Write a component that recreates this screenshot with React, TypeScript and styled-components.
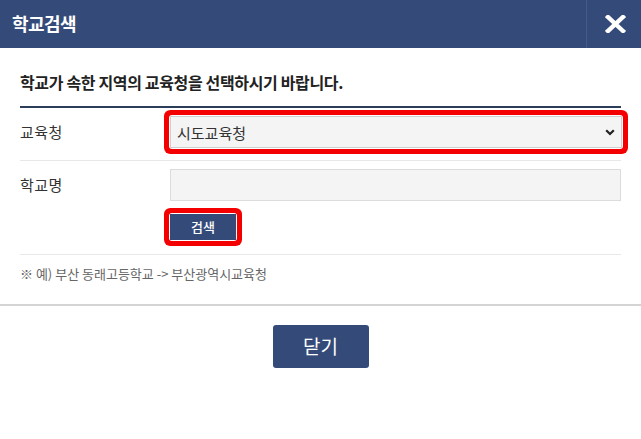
import React from "react";
import styled, { createGlobalStyle } from "styled-components";

const Global = createGlobalStyle`
  html, body { margin: 0; padding: 0; background: #fff; }
  body { font-family: "Noto Sans CJK KR", "Noto Sans", sans-serif; color: #222; }
  * { box-sizing: border-box; }
`;

const NAVY = "#344b79";

const Popup = styled.div`
  width: 641px;
  height: 439px;
  background: #fff;
`;

const Header = styled.header`
  display: flex;
  height: 48px;
  background: ${NAVY};
`;

const Title = styled.h1`
  flex: 1;
  margin: 0;
  padding-left: 12px;
  font-size: 18px;
  font-weight: 700;
  letter-spacing: -0.6px;
  line-height: 46px;
  color: #fff;
`;

const CloseX = styled.button`
  width: 55px;
  border: 0;
  border-left: 1px solid rgba(255, 255, 255, 0.09);
  background: transparent;
  display: flex;
  align-items: center;
  justify-content: center;
  padding: 0 0 0 2px;
  cursor: pointer;
`;

const Body = styled.div`
  padding: 0 20px;
  border-bottom: 2px solid #d4d4d4;
`;

const Guide = styled.p`
  margin: 0;
  padding: 23px 0 13px;
  font-size: 16px;
  font-weight: 700;
  letter-spacing: -0.35px;
  line-height: 22px;
  color: #222;
  border-bottom: 2px solid #2b3d58;
`;

const Row = styled.div<{ $pb: number }>`
  display: grid;
  grid-template-columns: 150px 1fr;
  padding: 8px 0 ${(p) => p.$pb}px;
  border-bottom: 1px solid #e8e8e8;
`;

const Label = styled.div`
  font-size: 15px;
  letter-spacing: 0.5px;
  line-height: 32px;
  color: #333;
`;

const Field = styled.div`
  display: flex;
  flex-direction: column;
  align-items: flex-start;
`;

const Mark = styled.span<{ $full?: boolean }>`
  position: relative;
  display: block;
  width: ${(p) => (p.$full ? "calc(100% + 1px)" : "auto")};
  border-radius: 2px;
  box-shadow: 0 0 0 1px #fff, 0 0 0 6px #f40000;
`;

const Select = styled.select`
  display: block;
  width: 100%;
  height: 32px;
  appearance: none;
  -webkit-appearance: none;
  border: 1px solid #cfcfcf;
  background: #f4f4f4;
  padding: 0 6px;
  font-family: "Noto Sans CJK KR", "Noto Sans", sans-serif;
  font-size: 15px;
  color: #333;
  outline: none;
`;

const Chevron = styled.svg`
  position: absolute;
  right: 7px;
  top: 13px;
  pointer-events: none;
`;

const Input = styled.input`
  display: block;
  width: 100%;
  height: 32px;
  border: 1px solid #dcdcdc;
  background: #f4f4f4;
  outline: none;
`;

const SearchWrap = styled.div`
  margin-top: 13px;
`;

const SearchButton = styled.button`
  display: block;
  width: 66px;
  height: 26px;
  border: 0;
  border-radius: 0;
  background: ${NAVY};
  color: #fff;
  font-family: "Noto Sans CJK KR", "Noto Sans", sans-serif;
  font-size: 13px;
  font-weight: 500;
  line-height: 26px;
  padding: 0;
`;

const Note = styled.p`
  margin: 0;
  padding: 9px 0 20px;
  font-size: 13px;
  line-height: 20px;
  color: #666;
`;

const Footer = styled.div`
  display: flex;
  justify-content: center;
  padding-top: 19px;
`;

const CloseButton = styled.button`
  width: 96px;
  height: 43px;
  border: 0;
  border-radius: 3px;
  background: ${NAVY};
  color: #fff;
  font-family: "Noto Sans CJK KR", "Noto Sans", sans-serif;
  font-size: 19px;
  padding: 0 0 2px;
  cursor: pointer;
`;

export default function App() {
  return (
    <>
      <Global />
      <Popup>
        <Header>
          <Title>학교검색</Title>
          <CloseX aria-label="닫기">
            <svg width="21" height="18" viewBox="0 0 21 18">
              <path d="M3 2 L18 16 M18 2 L3 16" stroke="#fff" strokeWidth="4.4" strokeLinecap="square" fill="none" />
            </svg>
          </CloseX>
        </Header>
        <Body>
          <Guide>학교가 속한 지역의 교육청을 선택하시기 바랍니다.</Guide>
          <Row $pb={12}>
            <Label>교육청</Label>
            <Field>
              <Mark $full>
                <Select defaultValue="">
                  <option value="">시도교육청</option>
                </Select>
                <Chevron width="10" height="7" viewBox="0 0 10 7">
                  <path d="M1.2 1.2 L5 5 L8.8 1.2" stroke="#222" strokeWidth="2.2" fill="none" />
                </Chevron>
              </Mark>
            </Field>
          </Row>
          <Row $pb={14}>
            <Label>학교명</Label>
            <Field>
              <Input type="text" />
              <SearchWrap>
                <Mark>
                  <SearchButton>검색</SearchButton>
                </Mark>
              </SearchWrap>
            </Field>
          </Row>
          <Note>※ 예) 부산 동래고등학교 -&gt; 부산광역시교육청</Note>
        </Body>
        <Footer>
          <CloseButton>닫기</CloseButton>
        </Footer>
      </Popup>
    </>
  );
}
